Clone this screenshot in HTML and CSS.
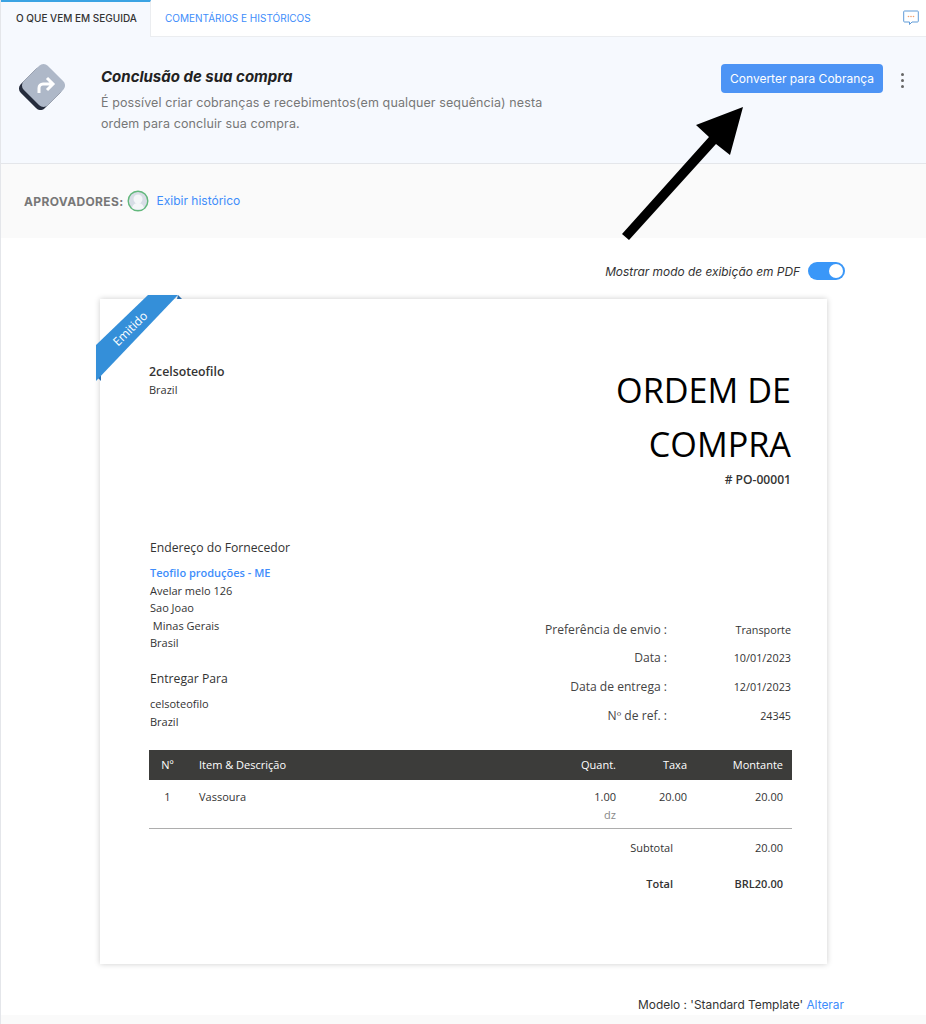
FILE: index.html
```html
<!DOCTYPE html>
<html lang="pt-BR">
<head>
    <meta charset="UTF-8">
    <meta name="viewport" content="width=device-width, initial-scale=1.0">
    <title>Ordem de Compra PO-00001</title>
    <link rel="stylesheet" href="styles.css">
</head>
<body>
    <div class="page">
        <div class="tabs">
            <div class="tab tab-active">O que vem em seguida</div>
            <div class="tab">Comentários e históricos</div>
            <svg class="comment-icon" width="16" height="16" viewBox="0 0 16 16">
                <path d="M1.5 1h13a.8.8 0 0 1 .8.8v9.4a.8.8 0 0 1-.8.8H9l-2.5 2.5V12h-5a.8.8 0 0 1-.8-.8V1.800a.8.8 0 0 1 .8-.8z" fill="none" stroke="#5f9bd8" stroke-width="1"/>
                <circle cx="5.500" cy="6.500" r=".8" fill="#f0a070"/>
                <circle cx="8" cy="6.500" r=".8" fill="#f0a070"/>
                <circle cx="10.500" cy="6.500" r=".8" fill="#f0a070"/>
            </svg>
        </div>

        <div class="banner">
            <svg class="banner-icon" width="48" height="48" viewBox="0 0 48 48">
                <rect x="6.500" y="9.500" width="34" height="34" rx="6" transform="rotate(45 23.500 26.500)" fill="#252c3c"/>
                <rect x="9.500" y="6.500" width="34" height="34" rx="6" transform="rotate(45 26.500 23.500)" fill="#aeb8c8"/>
                <path d="M22 31v-5a4 4 0 0 1 4-4h9M30 16l6 6-6 6" fill="none" stroke="#fff" stroke-width="3"/>
            </svg>
            <div class="banner-text">
                <h2>Conclusão de sua compra</h2>
                <p>É possível criar cobranças e recebimentos(em qualquer sequência) nesta ordem para concluir sua compra.</p>
            </div>
            <button class="btn-primary">Converter para Cobrança</button>
            <div class="dots"><span></span><span></span><span></span></div>
        </div>

        <div class="approvers">
            <span class="approvers-label">Aprovadores:</span>
            <svg class="avatar" width="22" height="22" viewBox="0 0 22 22">
                <circle cx="11" cy="11" r="9.800" fill="#d8dde6" stroke="#62b87c" stroke-width="1.400"/>
                <circle cx="11" cy="9" r="4.500" fill="#f4f6f8"/>
                <path d="M5 18c1-4 3.500-5 6-5s5 1 6 5c-3 2-9 2-12 0z" fill="#f4f6f8"/>
            </svg>
            <a class="link">Exibir histórico</a>
        </div>

        <div class="pdf-toggle">
            <span>Mostrar modo de exibição em PDF</span>
            <div class="toggle"><div class="toggle-knob"></div></div>
        </div>

        <div class="doc">
            <svg class="ribbon" width="90" height="90" viewBox="0 0 90 90">
                <path d="M82 0l4 4h-5z" fill="#2a6cab"/>
                <path d="M0 81l5 5v-5z" fill="#2a6cab"/>
                <path d="M52 0h30L0 86V50z" fill="#348fd9"/>
            </svg>
            <span class="ribbon-text">Emitido</span>

            <div class="doc-head">
                <div class="company">
                    <strong>2celsoteofilo</strong>
                    <span>Brazil</span>
                </div>
                <div class="doc-title">
                    <h1>ORDEM DE COMPRA</h1>
                    <div class="doc-number"># PO-00001</div>
                </div>
            </div>

            <div class="doc-info">
                <div class="addresses">
                    <h4>Endereço do Fornecedor</h4>
                    <a class="vendor">Teofilo produções - ME</a>
                    <div class="address">Avelar melo 126<br>Sao Joao<br>&nbsp;Minas Gerais<br>Brasil</div>
                    <h4 class="ship-to">Entregar Para</h4>
                    <div class="address">celsoteofilo<br>Brazil</div>
                </div>
                <div class="meta">
                    <div class="meta-row"><span class="meta-label">Preferência de envio :</span><span class="meta-value">Transporte</span></div>
                    <div class="meta-row"><span class="meta-label">Data :</span><span class="meta-value">10/01/2023</span></div>
                    <div class="meta-row"><span class="meta-label">Data de entrega :</span><span class="meta-value">12/01/2023</span></div>
                    <div class="meta-row"><span class="meta-label">Nº de ref. :</span><span class="meta-value">24345</span></div>
                </div>
            </div>

            <table class="items">
                <thead>
                    <tr>
                        <th class="col-num">Nº</th>
                        <th class="col-item">Item &amp; Descrição</th>
                        <th class="col-qty">Quant.</th>
                        <th class="col-rate">Taxa</th>
                        <th class="col-amount">Montante</th>
                    </tr>
                </thead>
                <tbody>
                    <tr>
                        <td class="col-num">1</td>
                        <td class="col-item">Vassoura</td>
                        <td class="col-qty">1.00<div class="unit">dz</div></td>
                        <td class="col-rate">20.00</td>
                        <td class="col-amount">20.00</td>
                    </tr>
                </tbody>
            </table>

            <div class="totals">
                <div class="total-row"><span>Subtotal</span><span>20.00</span></div>
                <div class="total-row total-bold"><span>Total</span><span>BRL20.00</span></div>
            </div>
        </div>

        <div class="template-row">Modelo : 'Standard Template' <a class="link">Alterar</a></div>
        <div class="bottom-strip"></div>

        <!-- annotation drawn over the screenshot -->
        <svg class="arrow" width="130" height="140" viewBox="0 0 130 140">
            <path d="M122 2L109 50 95 39 8 135 1 129 88 32 75 20z" fill="#000"/>
        </svg>
    </div>
</body>
</html>
```

FILE: styles.css
```css
* {
    margin: 0;
    padding: 0;
    box-sizing: border-box;
}

body {
    font-family: Inter, 'Noto Sans', sans-serif;
    background: #fff;
    color: #222;
}

.page {
    position: relative;
    width: 926px;
    height: 1024px;
    overflow: hidden;
    border-left: 1px solid #e4e6ea;
}

.link {
    color: #408dfb;
}

/* tabs */
.tabs {
    display: flex;
    height: 37px;
    border-bottom: 1px solid #ebedf0;
    position: relative;
}

.tab {
    padding: 0 14px;
    line-height: 36px;
    font-size: 10px;
    text-transform: uppercase;
    color: #408dfb;
    white-space: nowrap;
}

.tab-active {
    width: 150px;
    height: 37px;
    background: #f6f9fe;
    color: #333;
    font-weight: 500;
    border-top: 2px solid #3aa3e3;
    border-right: 1px solid #ebedf0;
    line-height: 33px;
    padding-left: 15px;
    padding-right: 0;
}

.comment-icon {
    position: absolute;
    top: 10px;
    right: 7px;
}

/* banner */
.banner {
    display: flex;
    align-items: flex-start;
    height: 127px;
    background: #f6f9fe;
    border-bottom: 1px solid #e4e6ea;
    padding: 27px 0 0 16px;
}

.banner-icon {
    flex: none;
    margin-top: -2px;
}

.banner-text {
    width: 460px;
    margin-left: 36px;
}

.banner-text h2 {
    font-size: 15px;
    font-style: italic;
    font-weight: 700;
    line-height: 26px;
    color: #222;
}

.banner-text p {
    font-size: 12.5px;
    line-height: 21px;
    color: #777;
    letter-spacing: 0.11px;
    margin-top: 2px;
    width: 450px;
}

.btn-primary {
    flex: none;
    margin-left: 160px;
    width: 162px;
    height: 29px;
    background: #4d94f5;
    color: #fff;
    border: none;
    border-radius: 4px;
    font-family: inherit;
    font-size: 12px;
}

.dots {
    display: flex;
    flex-direction: column;
    gap: 3px;
    margin: 9px 0 0 18px;
}

.dots span {
    display: block;
    width: 3px;
    height: 3px;
    border-radius: 50%;
    background: #666;
}

/* approvers */
.approvers {
    display: flex;
    align-items: center;
    height: 74px;
    background: #fafafa;
    padding-left: 23px;
}

.approvers-label {
    font-size: 12px;
    font-weight: 700;
    color: #777;
    text-transform: uppercase;
    letter-spacing: 0.35px;
}

.avatar {
    margin: 0 8px 0 3px;
}

.approvers .link {
    font-size: 12px;
    margin-bottom: 2px;
}

/* pdf toggle */
.pdf-toggle {
    display: flex;
    justify-content: flex-end;
    align-items: center;
    gap: 8px;
    height: 61px;
    padding: 5px 81px 0 0;
    font-size: 11.9px;
    font-style: italic;
    color: #333;
}

.toggle {
    width: 37px;
    height: 18px;
    border-radius: 9px;
    background: #3a97f8;
    position: relative;
}

.toggle-knob {
    position: absolute;
    top: 2px;
    right: 2px;
    width: 14px;
    height: 14px;
    border-radius: 50%;
    background: #fff;
}

/* document */
.doc {
    position: relative;
    width: 727px;
    height: 665px;
    margin-left: 99px;
    padding: 64px 36px 0 49px;
    background: #fff;
    box-shadow: 0 0 6px rgba(0, 0, 0, 0.2);
    font-family: 'Open Sans', sans-serif;
    font-size: 11px;
    color: #333;
}

.ribbon {
    position: absolute;
    top: -4px;
    left: -4px;
}

.ribbon-text {
    position: absolute;
    top: 21px;
    left: 0;
    width: 60px;
    text-align: center;
    color: #fff;
    font-size: 12px;
    transform: rotate(-45deg);
}

.doc-head {
    display: flex;
    justify-content: space-between;
    align-items: flex-start;
}

.company strong {
    display: block;
    font-size: 12.3px;
    font-weight: 600;
    line-height: 16px;
    margin-top: 1px;
}

.company span {
    display: block;
    line-height: 19px;
}

.doc-title {
    width: 240px;
    text-align: right;
}

.doc-title h1 {
    font-size: 34.2px;
    font-weight: 400;
    line-height: 54px;
    color: #000;
}

.doc-number {
    font-size: 12.1px;
    font-weight: 600;
    line-height: 18px;
}

.doc-info {
    display: flex;
    justify-content: space-between;
    align-items: flex-end;
    margin-top: 50px;
}

.addresses {
    padding-left: 1px;
}

.addresses h4 {
    font-size: 12.2px;
    font-weight: 400;
    line-height: 18px;
    color: #333;
}

.vendor {
    display: block;
    color: #408dfb;
    font-weight: 600;
    line-height: 17.5px;
    margin-top: 7px;
}

.address {
    line-height: 17.5px;
}

.addresses .ship-to {
    margin-top: 18.5px;
    margin-bottom: 7px;
}

.meta {
    display: flex;
    flex-direction: column;
    gap: 10.8px;
    margin-bottom: 5px;
}

.meta-row {
    display: flex;
    justify-content: flex-end;
    line-height: 18px;
}

.meta-label {
    font-size: 12.1px;
    width: 140px;
    text-align: right;
    color: #444;
}

.meta-value {
    font-size: 10.8px;
    width: 124px;
    text-align: right;
}

/* items table */
.items {
    width: 643px;
    margin-top: 20px;
    border-collapse: collapse;
    table-layout: fixed;
    border-bottom: 1px solid #adadad;
}

.items th {
    height: 30px;
    padding-bottom: 2px;
    background: #3c3c3a;
    color: #fff;
    font-weight: 400;
    font-size: 11px;
}

.items td {
    height: 48px;
    padding-top: 8px;
    vertical-align: top;
    line-height: 17px;
}

.col-num {
    width: 37px;
    text-align: center;
}

.items .col-item {
    padding-left: 13px;
    text-align: left;
}

.col-qty {
    width: 90px;
    text-align: right;
}

.col-rate {
    width: 71px;
    text-align: right;
}

.col-amount {
    width: 105px;
    text-align: right;
    padding-right: 9px;
}

.unit {
    color: #888;
    margin-top: 1px;
}

/* totals */
.totals {
    width: 643px;
    padding-top: 10px;
}

.total-row {
    display: flex;
    justify-content: flex-end;
    height: 36px;
    line-height: 18px;
}

.total-row span:first-child {
    width: 120px;
    text-align: right;
}

.total-row span:last-child {
    width: 119px;
    padding-right: 9px;
    text-align: right;
}

.total-bold {
    font-weight: 600;
}

/* footer */
.template-row {
    margin-top: 32px;
    height: 19px;
    padding-right: 82px;
    line-height: 18px;
    text-align: right;
    font-size: 11.9px;
    color: #333;
}

.bottom-strip {
    height: 20px;
    background: #fafafa;
}

.arrow {
    position: absolute;
    top: 105px;
    left: 620px;
}
```
